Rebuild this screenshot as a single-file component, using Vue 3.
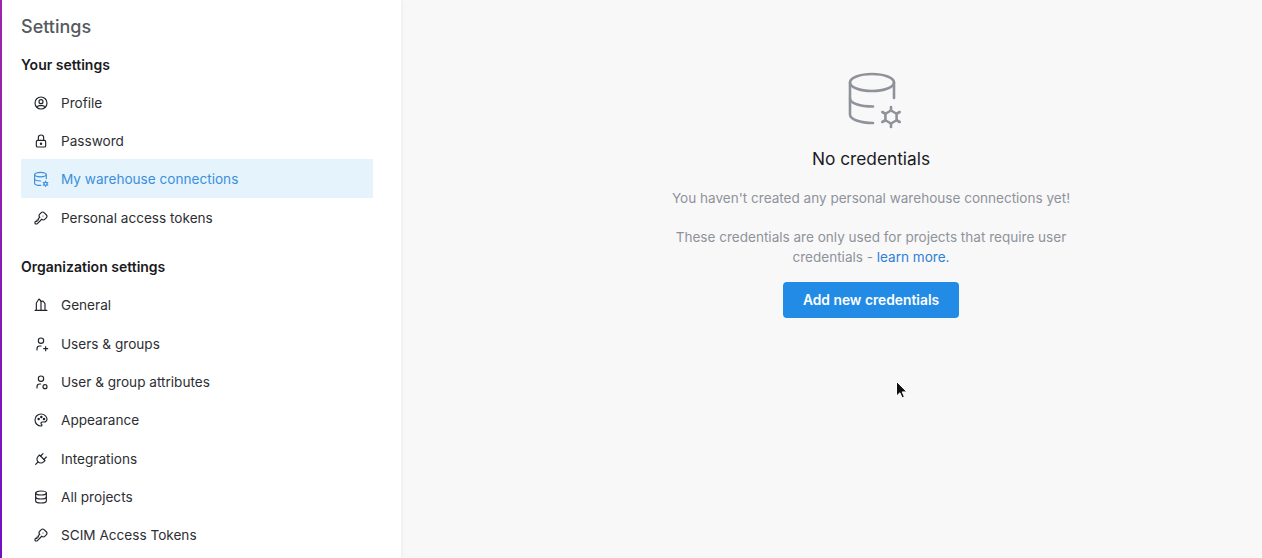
<script setup>
const icons = {
  profile: ['M12 12m-9 0a9 9 0 1 0 18 0a9 9 0 1 0 -18 0','M12 10m-3 0a3 3 0 1 0 6 0a3 3 0 1 0 -6 0','M6.168 18.849a4 4 0 0 1 3.832 -2.849h4a4 4 0 0 1 3.834 2.855'],
  lock: ['M5 13a2 2 0 0 1 2 -2h10a2 2 0 0 1 2 2v6a2 2 0 0 1 -2 2h-10a2 2 0 0 1 -2 -2v-6z','M11 16a1 1 0 1 0 2 0a1 1 0 0 0 -2 0','M8 11v-4a4 4 0 1 1 8 0v4'],
  key: ['M16.555 3.843l3.602 3.602a2.877 2.877 0 0 1 0 4.069l-2.643 2.643a2.877 2.877 0 0 1 -4.069 0l-.301 -.301l-6.558 6.558a2 2 0 0 1 -1.239 .578l-.175 .008h-1.172a1 1 0 0 1 -.993 -.883l-.007 -.117v-1.172a2 2 0 0 1 .467 -1.284l.119 -.13l.414 -.414h2v-2h2v-2l2.144 -2.144l-.301 -.301a2.877 2.877 0 0 1 0 -4.069l2.643 -2.643a2.877 2.877 0 0 1 4.069 0z','M15 9h.01'],
  building: ['M3 20h18','M5 20v-11l4 -6l3 3v14','M12 7l3 -1l3 4v10'],
  userplus: ['M8 7a4 4 0 1 0 8 0a4 4 0 0 0 -8 0','M6 21v-2a4 4 0 0 1 4 -4h2','M16 19h6','M19 16v6'],
  usercircle: ['M8 7a4 4 0 1 0 8 0a4 4 0 0 0 -8 0','M6 21v-2a4 4 0 0 1 4 -4h1.5','M18 19m-3 0a3 3 0 1 0 6 0a3 3 0 1 0 -6 0'],
  palette: ['M12 21a9 9 0 0 1 0 -18c4.97 0 9 3.582 9 8c0 1.06 -.474 2.078 -1.318 2.828c-.844 .75 -1.989 1.172 -3.182 1.172h-2.5a2 2 0 0 0 -1 3.75a1.3 1.3 0 0 1 -1 2.25','M8.5 10.5m-1 0a1 1 0 1 0 2 0a1 1 0 1 0 -2 0','M12.5 7.5m-1 0a1 1 0 1 0 2 0a1 1 0 1 0 -2 0','M16.5 10.5m-1 0a1 1 0 1 0 2 0a1 1 0 1 0 -2 0'],
  plug: ['M9.785 6l8.215 8.215l-2.054 2.054a5.81 5.81 0 1 1 -8.215 -8.215l2.054 -2.054z','M4 20l3.5 -3.5','M15 4l-3.5 3.5','M20 9l-3.5 3.5'],
  db: ['M12 6m-8 0a8 3 0 1 0 16 0a8 3 0 1 0 -16 0','M4 6v6a8 3 0 0 0 16 0v-6','M4 12v6a8 3 0 0 0 16 0v-6'],
}
const dbCog = [
  'M10 15.5a22 8.5 0 1 0 44 0a22 8.5 0 1 0 -44 0',
  'M10 15.5V47.5c0 4.7 9.8 8.5 23 8.5',
  'M10 31.5c0 4.7 9.8 8 23 8',
  'M54 15.5V31',
  'M51 43.5l5.6 3.25v6.5l-5.6 3.25l-5.6 -3.25v-6.5z',
  'M51 43.5v-3.5','M56.6 46.75l3.1 -1.75','M56.6 53.25l3.1 1.75','M51 56.5v3.5','M45.4 53.25l-3.1 1.75','M45.4 46.75l-3.1 -1.75',
]
const personal = [
  { label: 'Profile', icon: 'profile' },
  { label: 'Password', icon: 'lock' },
  { label: 'My warehouse connections', icon: 'dbcog', active: true },
  { label: 'Personal access tokens', icon: 'key' },
]
const org = [
  { label: 'General', icon: 'building' },
  { label: 'Users & groups', icon: 'userplus' },
  { label: 'User & group attributes', icon: 'usercircle' },
  { label: 'Appearance', icon: 'palette' },
  { label: 'Integrations', icon: 'plug' },
  { label: 'All projects', icon: 'db' },
  { label: 'SCIM Access Tokens', icon: 'key' },
]
const groups = [
  { title: 'Your settings', items: personal },
  { title: 'Organization settings', items: org },
]
</script>

<template>
  <div class="page">
    <aside class="sidebar">
      <h1 class="heading">Settings</h1>
      <section v-for="g in groups" :key="g.title" class="group">
        <h2 class="group-title">{{ g.title }}</h2>
        <a v-for="it in g.items" :key="it.label" class="item" :class="{ active: it.active }">
          <svg v-if="it.icon === 'dbcog'" class="icon" viewBox="4 2 60 60" fill="none" stroke="currentColor" stroke-width="4.2" stroke-linecap="round" stroke-linejoin="round">
            <path v-for="d in dbCog" :key="d" :d="d" />
          </svg>
          <svg v-else class="icon" viewBox="0 0 24 24" fill="none" stroke="currentColor" stroke-width="1.75" stroke-linecap="round" stroke-linejoin="round">
            <path v-for="d in icons[it.icon]" :key="d" :d="d" />
          </svg>
          <span>{{ it.label }}</span>
        </a>
      </section>
    </aside>
    <main class="main">
      <svg class="hero" viewBox="-1 -1 64 64" fill="none" stroke="currentColor" stroke-width="2.6" stroke-linecap="round" stroke-linejoin="round">
        <path v-for="d in dbCog" :key="d" :d="d" />
      </svg>
      <h3 class="title">No credentials</h3>
      <p class="line first">You haven't created any personal warehouse connections yet!</p>
      <p class="line second">These credentials are only used for projects that require user credentials - <a class="link">learn more.</a></p>
      <button class="btn">Add new credentials</button>
    </main>
    <svg class="cursor" width="14" height="20" viewBox="0 0 14 20">
      <path d="M1.5 1.5v14.5l3.4-3.2 2.2 5 2.3-1-2.2-4.9h4.6z" fill="#111" stroke="#fff" stroke-width="1" />
    </svg>
  </div>
</template>

<style scoped>
.page {
  position: relative;
  display: flex;
  height: 558px;
  overflow: hidden;
  font-family: Inter, "Liberation Sans", sans-serif;
  background: #f8f8f9;
}
.sidebar {
  width: 401px;
  height: 558px;
  flex: none;
  box-sizing: border-box;
  padding: 16px 28px 0 19px;
  background: #fff;
  border-left: 2px solid;
  border-image: linear-gradient(#a024a8, #7010c4) 1;
  box-shadow: 1px 0 4px rgba(0, 0, 0, 0.05);
  overflow: hidden;
}
.heading {
  margin: 0 0 16px;
  font-size: 18px;
  line-height: 22px;
  font-weight: 500;
  color: #555a60;
}
.group { margin-bottom: 19.4px; }
.group-title {
  margin: 0 0 7.5px;
  font-size: 14px;
  line-height: 22px;
  font-weight: 600;
  color: #1a1b1e;
}
.item {
  display: flex;
  align-items: center;
  box-sizing: border-box;
  height: 38.4px;
  padding-left: 12px;
  font-size: 13.6px;
  color: #2c2e33;
}
.item.active {
  margin: -1px 0 1px;
  padding-top: 2px;
  background: #e4f3fc;
  color: #3c8fdd;
}
.icon {
  width: 16px;
  height: 16px;
  margin-right: 12px;
  flex: none;
  color: #212529;
}
.active .icon { color: #3c8fdd; }
.main {
  flex: 1;
  display: flex;
  flex-direction: column;
  align-items: center;
  padding: 66px 0 0 79px;
  text-align: center;
  color: #8f9399;
  font-size: 13.55px;
  line-height: 20px;
}
.hero {
  width: 64px;
  height: 64px;
  color: #8f9399;
}
.title {
  margin: 17px 0 0;
  font-size: 17.3px;
  line-height: 24px;
  font-weight: 400;
  color: #1a1b1e;
}
.line { margin: 0; width: 410px; }
.first { margin-top: 17px; }
.second { margin-top: 19px; }
.link { color: #2f80d8; }
.btn {
  margin-top: 15px;
  width: 176px;
  height: 36px;
  padding: 0 0 1px;
  border: 0;
  border-radius: 4px;
  background: #228be6;
  color: #fff;
  font: 600 13.8px Inter, "Liberation Sans", sans-serif;
}
.cursor {
  position: absolute;
  left: 895px;
  top: 380px;
}
</style>
